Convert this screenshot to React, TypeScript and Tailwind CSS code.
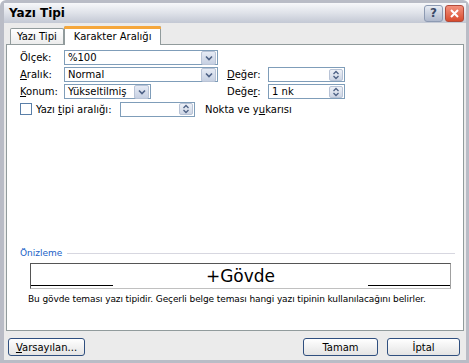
import React from "react";

const font = { fontFamily: '"DejaVu Sans", Verdana, sans-serif' };

function Arrow() {
  return (
    <span className="flex h-[14px] w-[15px] items-center justify-center rounded-[2px] border border-[#b8c3d6] bg-gradient-to-b from-[#e6ebf5] to-[#c6d0e2]">
      <svg width="8" height="6" viewBox="0 0 8 6">
        <path d="M1 1.5 L4 4.5 L7 1.5" stroke="#4d6185" strokeWidth="1.6" fill="none" />
      </svg>
    </span>
  );
}

function Spin() {
  return (
    <span className="flex h-[12px] w-[14px] items-center justify-center rounded-[2px] border border-[#b8c3d6] bg-gradient-to-b from-[#eef1f7] to-[#cdd5e4]">
      <svg width="8" height="10" viewBox="0 0 8 10">
        <path d="M1.5 4 L4 1.5 L6.5 4" stroke="#4d6185" strokeWidth="1.3" fill="none" />
        <path d="M1.5 6 L4 8.5 L6.5 6" stroke="#4d6185" strokeWidth="1.3" fill="none" />
      </svg>
    </span>
  );
}

function Select({ value, width }: { value: string; width: string }) {
  return (
    <div className={`flex h-[15px] items-center justify-between border border-[#7f9db9] bg-white pl-[3px] pr-[1px] ${width}`}>
      <span className="text-[10px] leading-none">{value}</span>
      <Arrow />
    </div>
  );
}

function SpinInput({ value, width }: { value: string; width: string }) {
  return (
    <div className={`flex h-[15px] items-center justify-between border border-[#7f9db9] bg-white pl-[3px] pr-[1px] ${width}`}>
      <span className="text-[10px] leading-none">{value}</span>
      <Spin />
    </div>
  );
}

function Btn({ children, width }: { children: React.ReactNode; width: string }) {
  return (
    <div className={`flex h-[18px] items-center justify-center rounded-[3px] border border-[#2f4f7f] bg-gradient-to-b from-white to-[#e4e4e4] text-[10px] ${width}`}>
      {children}
    </div>
  );
}

export default function App() {
  return (
    <div style={font} className="h-[363px] w-[469px] overflow-hidden bg-white text-black">
      <div className="flex h-full w-full flex-col rounded-t-[6px] border-[3px] border-l-[4px] border-[#b9bcc6] bg-[#ebebeb]">
        {/* title bar */}
        <div className="flex h-[20px] items-center justify-between bg-gradient-to-b from-[#f7f8fa] via-[#dfe2e9] to-[#c3c8d4] pl-[5px] pr-[2px]">
          <span className="text-[12px] font-bold">Yazı Tipi</span>
          <div className="flex gap-[2px]">
            <div className="flex h-[17px] w-[19px] items-center justify-center rounded-[3px] border border-[#8d9ab2] bg-gradient-to-b from-[#e8ecf4] to-[#aeb8cc] text-[12px] font-bold text-[#3b4a66]">
              ?
            </div>
            <div className="flex h-[17px] w-[19px] items-center justify-center rounded-[3px] border border-[#b04a3a] bg-gradient-to-b from-[#f2907c] to-[#d84a2c]">
              <svg width="11" height="11" viewBox="0 0 11 11">
                <path d="M2 2 L9 9 M9 2 L2 9" stroke="white" strokeWidth="2" />
              </svg>
            </div>
          </div>
        </div>

        {/* tabs */}
        <div className="flex h-[21px] items-end pl-[6px] pt-[4px]">
          <div className="flex h-[16px] items-center rounded-t-[2px] border border-b-0 border-[#919b9c] bg-gradient-to-b from-white to-[#ececec] px-[6px] text-[10px]">
            Yazı Tipi
          </div>
          <div className="relative -mb-px flex h-[19px] items-center rounded-t-[2px] border border-b-0 border-[#919b9c] bg-white px-[9px] text-[10px]">
            <span className="absolute -top-px left-[-1px] right-[-1px] h-[3px] rounded-t-[2px] bg-[#f5a73c]" />
            Karakter Aralığı
          </div>
        </div>

        {/* panel */}
        <div className="mx-[2px] flex h-[287px] flex-col border border-[#919b9c] bg-white pl-[13px] pr-[6px] pt-[4px] text-[10px]">
          <div className="flex h-[17px] items-center">
            <span className="w-[44px]">Ölçek:</span>
            <Select value="%100" width="w-[154px]" />
          </div>
          <div className="flex h-[17px] items-center">
            <span className="w-[44px]">
              <u>A</u>ralık:
            </span>
            <Select value="Normal" width="w-[154px]" />
            <span className="ml-[9px] w-[41px]">
              <u>D</u>eğer:
            </span>
            <SpinInput value="" width="w-[77px]" />
          </div>
          <div className="flex h-[17px] items-center">
            <span className="w-[44px]">
              <u>K</u>onum:
            </span>
            <Select value="Yükseltilmiş" width="w-[87px]" />
            <span className="ml-[76px] w-[41px]">
              Değe<u>r</u>:
            </span>
            <SpinInput value="1 nk" width="w-[77px]" />
          </div>
          <div className="flex h-[18px] items-center">
            <span className="h-[12px] w-[12px] border border-[#5a7fa8] bg-white" />
            <span className="ml-[4px] w-[84px]">
              Yazı <u>t</u>ipi aralığı:
            </span>
            <SpinInput value="" width="w-[75px]" />
            <span className="ml-[10px]">
              Nokta ve y<u>u</u>karısı
            </span>
          </div>

          <div className="flex-1" />

          {/* preview */}
          <div className="flex items-center gap-[5px] pr-[2px]">
            <span className="text-[9px] text-[#1a5fc7]">Önizleme</span>
            <span className="h-px flex-1 bg-[#d7d7e0]" />
          </div>
          <div className="ml-[10px] mr-[6px] mt-[2px] flex h-[26px] items-end border border-[#555] border-b-[#c0c0c0] border-r-[#a0a0a0]">
            <span className="mb-[2px] h-px w-[82px] bg-black" />
            <span className="flex-1 text-center text-[17px] leading-[24px]">+Gövde</span>
            <span className="mb-[2px] h-px w-[82px] bg-black" />
          </div>
          <div className="ml-[8px] mt-[4px] text-[9px] tracking-[-0.1px]">
            Bu gövde teması yazı tipidir. Geçerli belge teması hangi yazı tipinin kullanılacağını belirler.
          </div>
          <div className="h-[24px]" />
        </div>

        {/* buttons */}
        <div className="flex items-center pl-[4px] pr-[6px] pt-[7px]">
          <Btn width="w-[77px]">
            <span>
              <u>V</u>arsayılan...
            </span>
          </Btn>
          <div className="flex-1" />
          <Btn width="w-[75px]">Tamam</Btn>
          <div className="w-[9px]" />
          <Btn width="w-[73px]">İptal</Btn>
        </div>
      </div>
    </div>
  );
}
